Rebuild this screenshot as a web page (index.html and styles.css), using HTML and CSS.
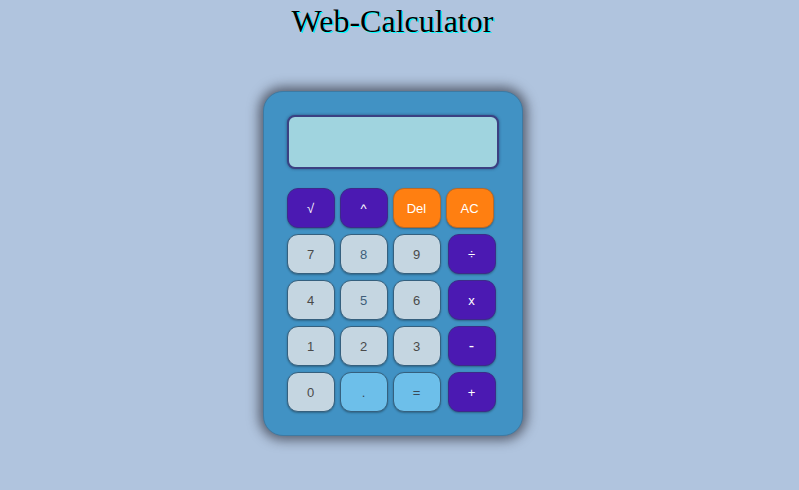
FILE: index.html
```html
<!DOCTYPE html>
<html>
<head>
<meta charset="utf-8">
<title>Web-Calculator</title>
<link rel="stylesheet" href="styles.css">
</head>
<body>
<div class="page">
  <h1 class="title">Web-Calculator</h1>
  <div class="calc">
    <div class="display"></div>
    <div class="keys">
      <button class="key op">√</button>
      <button class="key op">^</button>
      <button class="key fn">Del</button>
      <button class="key fn">AC</button>

      <button class="key num">7</button>
      <button class="key num alt">8</button>
      <button class="key num">9</button>
      <button class="key op side">÷</button>

      <button class="key num">4</button>
      <button class="key num alt">5</button>
      <button class="key num">6</button>
      <button class="key op side">x</button>

      <button class="key num">1</button>
      <button class="key num">2</button>
      <button class="key num">3</button>
      <button class="key op side big">-</button>

      <button class="key num">0</button>
      <button class="key light">.</button>
      <button class="key light">=</button>
      <button class="key op side">+</button>
    </div>
  </div>
</div>
</body>
</html>
```
FILE: styles.css
```css
html, body {
  margin: 0;
  padding: 0;
  background: #b0c4de;
  height: 100%;
}

.page {
  padding-right: 14px;
  display: flex;
  flex-direction: column;
  align-items: center;
}

.title {
  margin: 0;
  padding-top: 3px;
  font-family: "Liberation Serif", "Times New Roman", serif;
  font-weight: normal;
  font-size: 32px;
  line-height: 36px;
  color: #000;
  text-shadow: 1px 1px 0 #00ffff;
}

.calc {
  margin-top: 52px;
  box-sizing: border-box;
  width: 260px;
  height: 345px;
  padding: 23px 24px 24px 24px;
  background: #4192c4;
  border-radius: 20px;
  border: 1px solid #3d7aa3;
  box-shadow: 0 0 12px 4px rgba(25, 25, 35, 0.6);
}

.display {
  box-sizing: border-box;
  width: 212px;
  height: 54px;
  margin-left: -1px;
  background: #a0d4df;
  border: 2px solid #3b4082;
  border-radius: 8px;
  box-shadow: 0 0 3px rgba(20, 20, 60, 0.5);
}

.keys {
  margin-top: 19px;
  margin-left: -1px;
  display: grid;
  grid-template-columns: repeat(4, 48px);
  grid-auto-rows: 40px;
  column-gap: 5px;
  row-gap: 6px;
}

.key {
  box-sizing: border-box;
  margin: 0;
  padding: 0;
  border: 1px solid #35607e;
  border-radius: 11px;
  font-family: "Liberation Sans", Arial, sans-serif;
  font-size: 13px;
  color: #4a4a4a;
  background: #c5d6e1;
  box-shadow: 0 1px 2px rgba(0, 0, 0, 0.3);
}

.num { background: #c5d6e1; color: #4a4a4a; }
.alt { color: #3e5e7a; }
.light { background: #6dbfea; color: #3a4a58; }
.op { background: #4b19b2; color: #fff; border-color: #3d2a8a; }
.fn { background: #ff7f11; color: #fff; border-color: #b86a2a; }
.side { margin-left: 2px; margin-right: -2px; }
.big { font-size: 16px; }
```
